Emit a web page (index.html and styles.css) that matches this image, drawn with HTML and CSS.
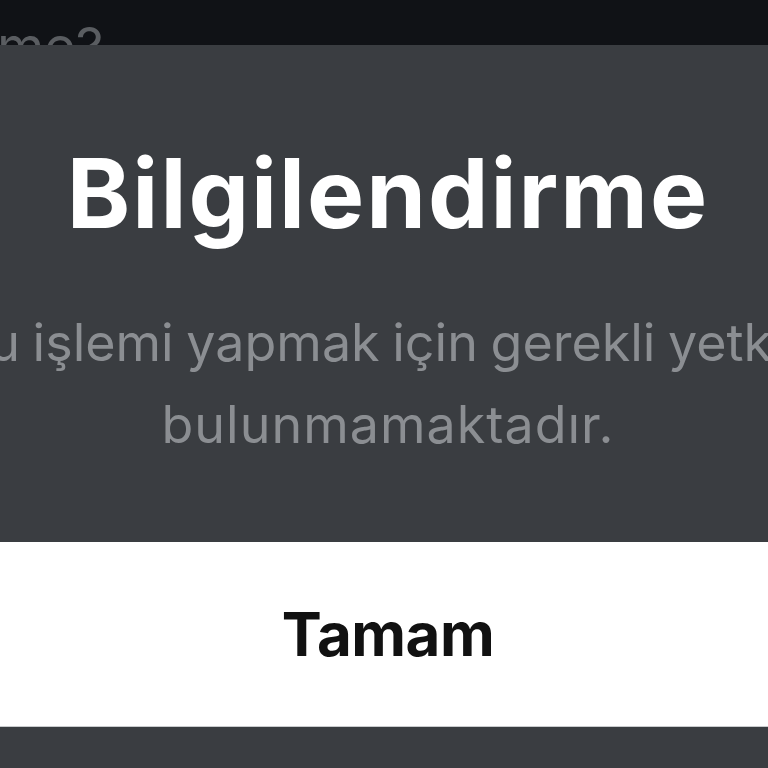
FILE: index.html
```html
<!DOCTYPE html>
<html lang="tr">
<head>
<meta charset="utf-8">
<title>Bilgilendirme</title>
<link rel="stylesheet" href="styles.css">
</head>
<body>
<div class="topbar"><span class="behind">me?</span></div>
<div class="dialog">
  <h1 class="title">Bilgilendirme</h1>
  <p class="message"><span class="line line-first">Bu işlemi yapmak için gerekli yetkiniz</span> <span class="line line-second">bulunmamaktadır.</span></p>
</div>
<div class="actions">
  <button class="ok">Tamam</button>
</div>
<div class="footer"></div>
</body>
</html>
```
FILE: styles.css
```css
html, body {
  margin: 0;
  padding: 0;
  width: 768px;
  height: 768px;
  overflow: hidden;
  background: #3a3d41;
  font-family: Inter, "Noto Sans", "Liberation Sans", sans-serif;
}
.topbar {
  height: 45px;
  background: #101216;
  overflow: hidden;
  position: relative;
}
.behind {
  display: block;
  margin-left: -3px;
  padding-top: 17px;
  font-size: 54px;
  line-height: 60px;
  color: #5a5d61;
  white-space: nowrap;
}
.dialog {
  width: 1000px;
  margin-left: -112px;
  height: 497px;
  padding-top: 100px;
  box-sizing: border-box;
  display: flex;
  flex-direction: column;
  align-items: center;
  text-align: center;
}
.title {
  margin: 0;
  font-size: 96px;
  line-height: 96px;
  font-weight: 700;
  color: #ffffff;
  letter-spacing: 2px;
  white-space: nowrap;
}
.message {
  margin: 61px 0 0;
  font-size: 52px;
  line-height: 82px;
  font-weight: 400;
  color: #8b8e92;
  white-space: nowrap;
}
.line {
  display: block;
}
.line-first {
  letter-spacing: 0;
  word-spacing: -2px;
  padding-left: 36px;
}
.line-second {
  letter-spacing: 1px;
}
.actions {
  height: 184px;
  background: #ffffff;
  border-bottom: 1px solid #c9cbcd;
  display: flex;
  align-items: center;
  justify-content: center;
  padding-left: 8px;
}
.ok {
  border: 0;
  background: transparent;
  padding: 0;
  font-family: inherit;
  font-size: 60px;
  line-height: 60px;
  font-weight: 700;
  color: #111111;
  letter-spacing: -0.5px;
}
.footer {
  height: 42px;
  background: #3a3d41;
}
```
